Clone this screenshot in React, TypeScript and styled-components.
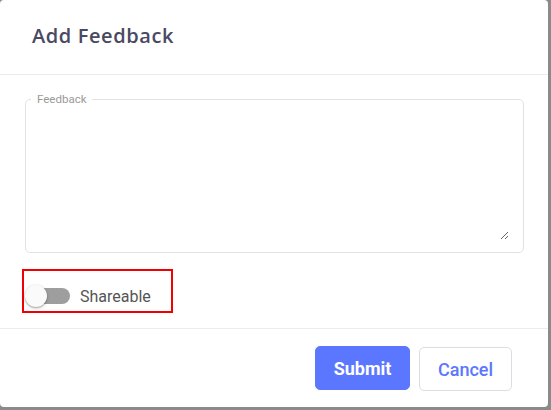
import React, { useState } from "react";
import styled, { createGlobalStyle } from "styled-components";

const Global = createGlobalStyle`
  html, body { margin: 0; padding: 0; background: #8a8a8a; }
  body { width: 551px; height: 410px; overflow: hidden; font-family: Roboto, "Liberation Sans", sans-serif; }
  * { box-sizing: border-box; }
`;

const Dialog = styled.div`
  width: 548px;
  height: 407px;
  background: #fff;
  border-radius: 4px;
  display: flex;
  flex-direction: column;
  overflow: hidden;
`;

const Header = styled.div`
  height: 75px;
  flex: none;
  display: flex;
  align-items: center;
  padding: 0 0 4px 32px;
  border-bottom: 1px solid #ececec;
`;

const Title = styled.h2`
  margin: 0;
  font-family: "Open Sans", Lato, sans-serif;
  font-weight: 600;
  font-size: 20px;
  letter-spacing: 0.6px;
  color: #4a4962;
`;

const Body = styled.div`
  flex: 1;
  display: flex;
  flex-direction: column;
  padding: 17px 24px 0 25px;
  border-bottom: 1px solid #ececec;
`;

const Field = styled.fieldset`
  margin: 0;
  padding: 0 14px 10px 12px;
  height: 161px;
  border: 1px solid #e2e2e2;
  border-radius: 5px;
`;

const Legend = styled.legend`
  padding: 0 6px;
  margin-left: -7px;
  font-size: 11.5px;
  color: #9a9a9a;
  line-height: 14px;
`;

const Area = styled.textarea`
  display: block;
  width: 100%;
  height: 134px;
  padding: 4px 0;
  border: none;
  outline: none;
  resize: vertical;
  font-family: Roboto, sans-serif;
  font-size: 14px;
  background: transparent;
`;

const SwitchBox = styled.label`
  margin-top: 16px;
  margin-left: -3px;
  width: 151px;
  height: 44px;
  border: 2px solid #f00000;
  display: flex;
  align-items: center;
  padding: 10px 0 0 1px;
  gap: 7px;
  cursor: pointer;
`;

const Track = styled.span<{ $on: boolean }>`
  position: relative;
  width: 45px;
  height: 24px;
  display: flex;
  align-items: center;
  &::before {
    content: "";
    position: absolute;
    left: 11px;
    right: 0;
    height: 16px;
    border-radius: 8px;
    background: ${(p) => (p.$on ? "#8fa0ff" : "#9e9e9e")};
  }
`;

const Thumb = styled.span<{ $on: boolean }>`
  position: absolute;
  left: ${(p) => (p.$on ? "23px" : "0")};
  top: 1px;
  width: 22px;
  height: 22px;
  border-radius: 50%;
  background: ${(p) => (p.$on ? "#5c77ff" : "#fafafa")};
  box-shadow: 0 1px 3px rgba(0, 0, 0, 0.3), 0 1px 1px rgba(0, 0, 0, 0.14);
`;

const SwitchLabel = styled.span`
  font-size: 16px;
  color: #555;
  margin-left: 3px;
`;

const Footer = styled.div`
  height: 78px;
  flex: none;
  display: flex;
  justify-content: flex-end;
  align-items: center;
  gap: 9px;
  padding: 0 36px 0 0;
`;

const Button = styled.button<{ $primary?: boolean }>`
  height: 44px;
  border-radius: 5px;
  font-family: Roboto, sans-serif;
  font-size: 18px;
  font-weight: ${(p) => (p.$primary ? 700 : 500)};
  cursor: pointer;
  border: 1px solid ${(p) => (p.$primary ? "#5c77ff" : "#dcdde3")};
  background: ${(p) => (p.$primary ? "#5c77ff" : "#fff")};
  color: ${(p) => (p.$primary ? "#fff" : "#5c77ff")};
  width: ${(p) => (p.$primary ? "95px" : "93px")};
  margin-top: ${(p) => (p.$primary ? "0" : "2px")};
`;

export default function App() {
  const [on, setOn] = useState(false);
  return (
    <>
      <Global />
      <Dialog>
        <Header>
          <Title>Add Feedback</Title>
        </Header>
        <Body>
          <Field>
            <Legend>Feedback</Legend>
            <Area />
          </Field>
          <SwitchBox onClick={() => setOn(!on)}>
            <Track $on={on}>
              <Thumb $on={on} />
            </Track>
            <SwitchLabel>Shareable</SwitchLabel>
          </SwitchBox>
        </Body>
        <Footer>
          <Button $primary>Submit</Button>
          <Button>Cancel</Button>
        </Footer>
      </Dialog>
    </>
  );
}
